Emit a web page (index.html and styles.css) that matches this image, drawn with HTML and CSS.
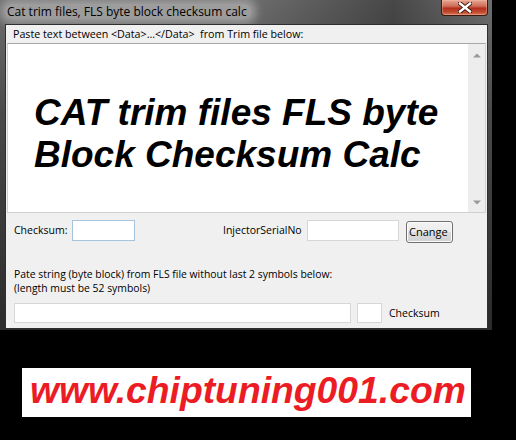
FILE: index.html
```html
<!DOCTYPE html>
<html>
<head>
<meta charset="utf-8">
<link rel="stylesheet" href="styles.css">
</head>
<body>
<div class="window">
  <div class="titlebar">
    <span class="title">Cat trim files, FLS byte block checksum calc</span>
    <div class="close">
      <svg width="14" height="11" viewBox="0 0 14 11">
        <path d="M2 1.5 L12 9.5 M12 1.5 L2 9.5" stroke="#3a1208" stroke-width="4.2" stroke-linecap="square" fill="none"/>
        <path d="M2 1.5 L12 9.5 M12 1.5 L2 9.5" stroke="#ffffff" stroke-width="2.4" stroke-linecap="square" fill="none"/>
      </svg>
    </div>
  </div>
  <div class="client">
    <div class="top-label">Paste text between &lt;Data&gt;…&lt;/Data&gt;&nbsp; from Trim file below:</div>
    <div class="textarea">
      <div class="ta-text">CAT trim files FLS byte<br>Block Checksum Calc</div>
      <div class="scrollbar">
        <svg width="8" height="5" viewBox="0 0 8 5"><path d="M0 4.5 L4 0.5 L8 4.5 Z" fill="#9a9a9a"/></svg>
        <svg width="8" height="5" viewBox="0 0 8 5"><path d="M0 0.5 L4 4.5 L8 0.5 Z" fill="#9a9a9a"/></svg>
      </div>
    </div>
    <div class="row1">
      <span class="lbl lbl-cs">Checksum:</span>
      <div class="input input-cs"></div>
      <span class="lbl lbl-inj">InjectorSerialNo</span>
      <div class="input input-inj"></div>
      <div class="button">Cnange</div>
    </div>
    <div class="desc">Pate string (byte block) from FLS file without last 2 symbols below:<br>(length must be 52 symbols)</div>
    <div class="row2">
      <div class="input input-long"></div>
      <div class="input input-small"></div>
      <span class="lbl lbl-cs2">Checksum</span>
    </div>
  </div>
</div>
<div class="banner">www.chiptuning001.com</div>
</body>
</html>
```
FILE: styles.css
```css
* { box-sizing: border-box; }
html, body { margin: 0; padding: 0; }
body {
  background: #000;
  width: 516px;
  height: 440px;
  overflow: hidden;
  font-family: "Open Sans", "Noto Sans", sans-serif;
  color: #000;
}
.window {
  width: 492px;
  height: 330px;
  padding: 0 4px 1px 5px;
  display: flex;
  flex-direction: column;
  background: linear-gradient(to bottom, #6e6e6e 0%, #4a4a4a 35%, #2a2a2a 100%);
}
.titlebar {
  height: 24px;
  display: flex;
  align-items: flex-start;
  background: linear-gradient(to right, rgba(0,0,0,0) 50%, rgba(0,0,0,0.35) 80%, rgba(0,0,0,0) 100%);
  margin: 0 -4px 0 -5px;
  padding: 0 4px 0 5px;
}
.title {
  margin-top: 4px;
  padding: 0 4px 0 2px;
  font-size: 12px;
  line-height: 15px;
  background: rgba(190,190,190,0.6);
  box-shadow: 0 0 8px 5px rgba(190,190,190,0.6);
  border-radius: 6px;
}
.close {
  margin-left: auto;
  width: 47px;
  height: 16px;
  border: 1px solid #3c1a12;
  border-top: none;
  border-radius: 0 0 4px 4px;
  background: linear-gradient(to bottom, #e6a694 0%, #d0705a 40%, #b5301c 55%, #c04a30 80%, #d77a5c 100%);
  box-shadow: inset 0 0 0 1px rgba(255,200,180,0.35);
  display: flex;
  align-items: center;
  justify-content: center;
}
.client {
  flex: 1;
  background: #f0f0f0;
  border: 1px solid #2e2e2e;
  display: flex;
  flex-direction: column;
}
.top-label {
  height: 18px;
  padding-left: 7px;
  font-size: 10.7px;
  line-height: 18px;
  white-space: nowrap;
}
.textarea {
  height: 170px;
  margin: 0 1px;
  background: #fff;
  border: 1px solid #d0d0d0;
  border-top-color: #a8a8a8;
  display: flex;
}
.ta-text {
  flex: 1;
  padding: 48px 0 0 26px;
  font: italic bold 37px/42px "Liberation Sans", Arial, sans-serif;
  white-space: nowrap;
}
.scrollbar {
  width: 17px;
  background: #ededed;
  display: flex;
  flex-direction: column;
  justify-content: space-between;
  align-items: center;
  padding: 9px 0 7px;
}
.lbl {
  font-size: 10.5px;
  line-height: 14px;
  white-space: nowrap;
}
.input {
  background: #fff;
  border: 1px solid #d6d6d6;
  height: 21px;
}
.row1 {
  display: flex;
  align-items: flex-start;
  padding: 7px 0 0 8px;
}
.row1 .lbl { margin-top: 3px; }
.lbl-cs { width: 58px; }
.input-cs { width: 63px; border-color: #a4c4e0; }
.lbl-inj { margin-left: 88px; width: 84px; }
.input-inj { width: 92px; }
.button {
  margin-left: 7px;
  margin-top: 1px;
  width: 47px;
  height: 22px;
  border: 1px solid #707070;
  border-radius: 3px;
  background: linear-gradient(to bottom, #f3f3f3 0%, #ebebeb 48%, #dcdcdc 52%, #d2d2d2 100%);
  box-shadow: inset 0 0 0 1px #fbfbfb;
  font-size: 11px;
  line-height: 20px;
  padding-left: 2px;
}
.desc {
  margin-top: 24px;
  padding-left: 8px;
  font-size: 10.4px;
  line-height: 14px;
  white-space: nowrap;
}
.row2 {
  display: flex;
  align-items: center;
  margin-top: 8px;
  padding-left: 8px;
}
.input-long { width: 337px; height: 20px; }
.input-small { width: 25px; height: 20px; margin-left: 6px; }
.lbl-cs2 { margin-left: 7px; }
.banner {
  margin: 38px 0 0 22px;
  width: 449px;
  height: 49px;
  background: #fff;
  color: #ec1c24;
  font: italic bold 37.3px/45px "Liberation Sans", Arial, sans-serif;
  padding-left: 8px;
  white-space: nowrap;
}
```
